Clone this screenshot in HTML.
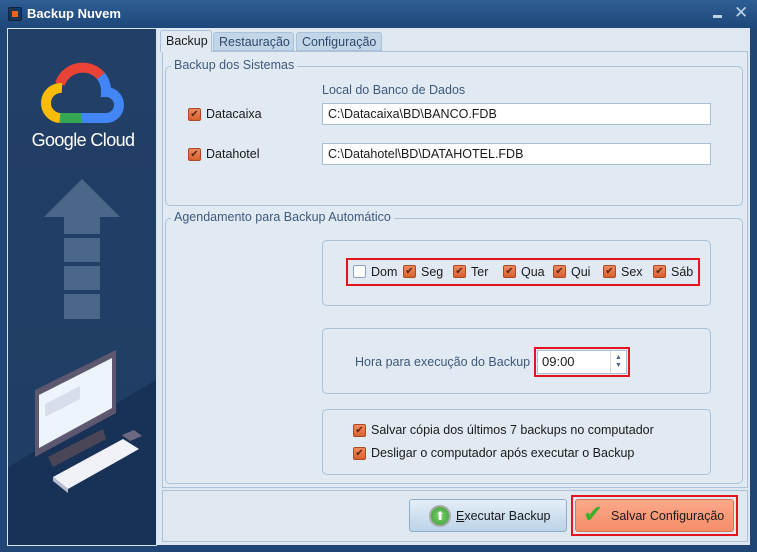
<!DOCTYPE html><html><head><meta charset="utf-8"><style>
*{box-sizing:border-box}body{margin:0;width:757px;height:552px;overflow:hidden;background:#1f4674;font-family:"Liberation Sans","DejaVu Sans",sans-serif;font-size:12.5px;color:#1a1a1a;position:relative}
.a{position:absolute}
.title{left:0;top:0;width:757px;height:28px;background:linear-gradient(#2e5e94,#1e477a)}
.cb{width:13px;height:13px;border:1px solid #a84a25;border-radius:2px;background:linear-gradient(#f08a60,#d9602f);display:inline-block;position:absolute;color:#5a2510;font-size:10px;line-height:11px;text-align:center}
.cb.off{background:#fff;border-color:#8aa4c0}
.grp{border:1px solid #a9c2da;border-radius:5px}
.lbl{white-space:nowrap}
.inp{background:#fff;border:1px solid #a9bfd4;height:22px;padding:3px 5px;font-size:12.5px}
.red{border:2px solid #e3141d}
</style></head><body>
<div class="a title"></div>
<div class="a" style="left:8px;top:7px;width:14px;height:14px;border:1px solid #0d2440;background:#16365a;border-radius:2px"><div class="a" style="left:3px;top:3px;width:6px;height:6px;background:#f0601f"></div></div>
<div class="a lbl" style="left:27px;top:6px;color:#fff;font-weight:bold;font-size:13px">Backup Nuvem</div>
<div class="a" style="left:713px;top:15px;width:9px;height:3px;background:#bcd1e6"></div>
<div class="a lbl" style="left:734px;top:3px;color:#bcd1e6;font-weight:bold;font-size:17px">✕</div>
<div class="a" style="left:7px;top:28px;width:150px;height:518px;background:linear-gradient(#223f67,#203d64);border:1px solid #d6e2ee"></div>
<svg class="a" style="left:8px;top:29px" width="148" height="516">
<text x="75" y="117" text-anchor="middle" fill="#fff" font-size="18" letter-spacing="-0.6" font-family="Liberation Sans">Google Cloud</text>
<g fill="#4a6688"><path d="M36 188 L74 150 L112 188 L92 188 L92 205 L56 205 L56 188 Z"/><rect x="56" y="209" width="36" height="24"/><rect x="56" y="237" width="36" height="24"/><rect x="56" y="265" width="36" height="25"/></g>
<path d="M0 438 L148 351 L148 516 L0 516 Z" fill="#152f53" opacity=".75"/>
<path d="M40 428 L95 400 L98 410 L45 438 Z" fill="#4a4658"/>
<path d="M27 361 L108 321 L108 384 L27 428 Z" fill="#5d5870"/>
<path d="M31 366 L104 329 L104 379 L31 419 Z" fill="#eef4fb"/>
<path d="M37 375 L72 357 L72 370 L37 388 Z" fill="#d6deec"/>
<path d="M45 448 L115 410 L131 420 L60 460 Z" fill="#f0f2f7"/>
<path d="M45 448 L60 460 L60 464 L45 452 Z" fill="#b8bccc"/>
<path d="M114 406 l12 -5 l8 6 l-12 5 z" fill="#6d6880"/>
</svg>
<svg class="a" style="left:40px;top:60px" width="90" height="70" fill="none" stroke-width="10">
<path d="M20 24 A24 24 0 0 1 61 16" stroke="#ea4335"/>
<path d="M61 16 A24 24 0 0 1 66 32 A13 13 0 0 1 66 58 L42 58" stroke="#4285f4"/>
<path d="M42 58 L20 58" stroke="#34a853"/>
<path d="M20 58 A15 15 0 0 1 22 28" stroke="#fbbc05"/>
</svg>
<div class="a" style="left:157px;top:28px;width:593px;height:517px;background:#dfe8f1"></div>
<div class="a" style="left:162px;top:51px;width:586px;height:437px;border:1px solid #a9c2da;background:#e1e9f2"></div>
<div class="a lbl" style="left:160px;top:30px;width:52px;height:22px;background:#e1e9f2;border:1px solid #a9c2da;border-bottom:none;border-radius:3px 3px 0 0;padding:3px 5px">Backup</div>
<div class="a lbl" style="left:213px;top:32px;width:81px;height:19px;background:#c3d6e8;border:1px solid #a9c2da;border-radius:3px 3px 0 0;padding:2px 5px;color:#2c4a6c">Restauração</div>
<div class="a lbl" style="left:296px;top:32px;width:86px;height:19px;background:#c3d6e8;border:1px solid #a9c2da;border-radius:3px 3px 0 0;padding:2px 5px;color:#2c4a6c">Configuração</div>
<div class="a grp" style="left:165px;top:66px;width:578px;height:140px"></div>
<div class="a lbl" style="left:171px;top:58px;background:#e1e9f2;padding:0 3px;color:#3d5a7c">Backup dos Sistemas</div>
<div class="a lbl" style="left:322px;top:83px;color:#3d5a7c">Local do Banco de Dados</div>
<span class="cb" style="left:188px;top:108px">✔</span><div class="a lbl" style="left:206px;top:107px">Datacaixa</div>
<div class="a inp" style="left:322px;top:103px;width:389px">C:\Datacaixa\BD\BANCO.FDB</div>
<span class="cb" style="left:188px;top:148px">✔</span><div class="a lbl" style="left:206px;top:147px">Datahotel</div>
<div class="a inp" style="left:322px;top:143px;width:389px">C:\Datahotel\BD\DATAHOTEL.FDB</div>
<div class="a grp" style="left:165px;top:218px;width:578px;height:266px"></div>
<div class="a lbl" style="left:171px;top:210px;background:#e1e9f2;padding:0 3px;color:#3d5a7c">Agendamento para Backup Automático</div>
<div class="a grp" style="left:322px;top:240px;width:389px;height:66px"></div>
<div class="a red" style="left:346px;top:258px;width:354px;height:28px"></div>
<span class="cb off" style="left:353px;top:265px"></span><div class="a lbl" style="left:371px;top:265px">Dom</div>
<span class="cb" style="left:403px;top:265px">✔</span><div class="a lbl" style="left:421px;top:265px">Seg</div>
<span class="cb" style="left:453px;top:265px">✔</span><div class="a lbl" style="left:471px;top:265px">Ter</div>
<span class="cb" style="left:503px;top:265px">✔</span><div class="a lbl" style="left:521px;top:265px">Qua</div>
<span class="cb" style="left:553px;top:265px">✔</span><div class="a lbl" style="left:571px;top:265px">Qui</div>
<span class="cb" style="left:603px;top:265px">✔</span><div class="a lbl" style="left:621px;top:265px">Sex</div>
<span class="cb" style="left:653px;top:265px">✔</span><div class="a lbl" style="left:671px;top:265px">Sáb</div>
<div class="a grp" style="left:322px;top:328px;width:389px;height:66px"></div>
<div class="a lbl" style="left:355px;top:355px;color:#3d5a7c">Hora para execução do Backup</div>
<div class="a red" style="left:534px;top:347px;width:96px;height:30px"></div>
<div class="a inp" style="left:537px;top:350px;width:90px;height:24px;font-size:13px;padding:3px 4px">09:00</div>
<div class="a" style="left:610px;top:351px;width:16px;height:22px;border-left:1px solid #d0dbe6;color:#4a6a8c;font-size:7px;line-height:8px;text-align:center;padding-top:3px">▲<br>▼</div>
<div class="a grp" style="left:322px;top:409px;width:389px;height:66px"></div>
<span class="cb" style="left:353px;top:424px">✔</span><div class="a lbl" style="left:371px;top:423px">Salvar cópia dos últimos 7 backups no computador</div>
<span class="cb" style="left:353px;top:447px">✔</span><div class="a lbl" style="left:371px;top:446px">Desligar o computador após executar o Backup</div>
<div class="a" style="left:162px;top:490px;width:586px;height:52px;border:1px solid #a9c2da"></div>
<div class="a" style="left:409px;top:499px;width:158px;height:33px;border:1px solid #8fb0cc;border-radius:3px;background:linear-gradient(#e4eef8,#bcd3e8)"></div>
<div class="a" style="left:429px;top:505px;width:22px;height:22px;border-radius:50%;background:radial-gradient(#7bd36f,#3a9a32);border:2px solid #aaa;color:#fff;font-size:12px;text-align:center;line-height:18px">⬆</div>
<div class="a lbl" style="left:456px;top:509px"><u>E</u>xecutar Backup</div>
<div class="a red" style="left:571px;top:495px;width:167px;height:41px"></div>
<div class="a" style="left:575px;top:499px;width:159px;height:33px;border:1px solid #d07a55;border-radius:3px;background:linear-gradient(#fba98a,#f58d69)"></div>
<div class="a lbl" style="left:583px;top:500px;color:#3cae2a;font-size:24px;font-weight:bold">✔</div>
<div class="a lbl" style="left:611px;top:509px">Salvar Configuração</div>
</body></html>
